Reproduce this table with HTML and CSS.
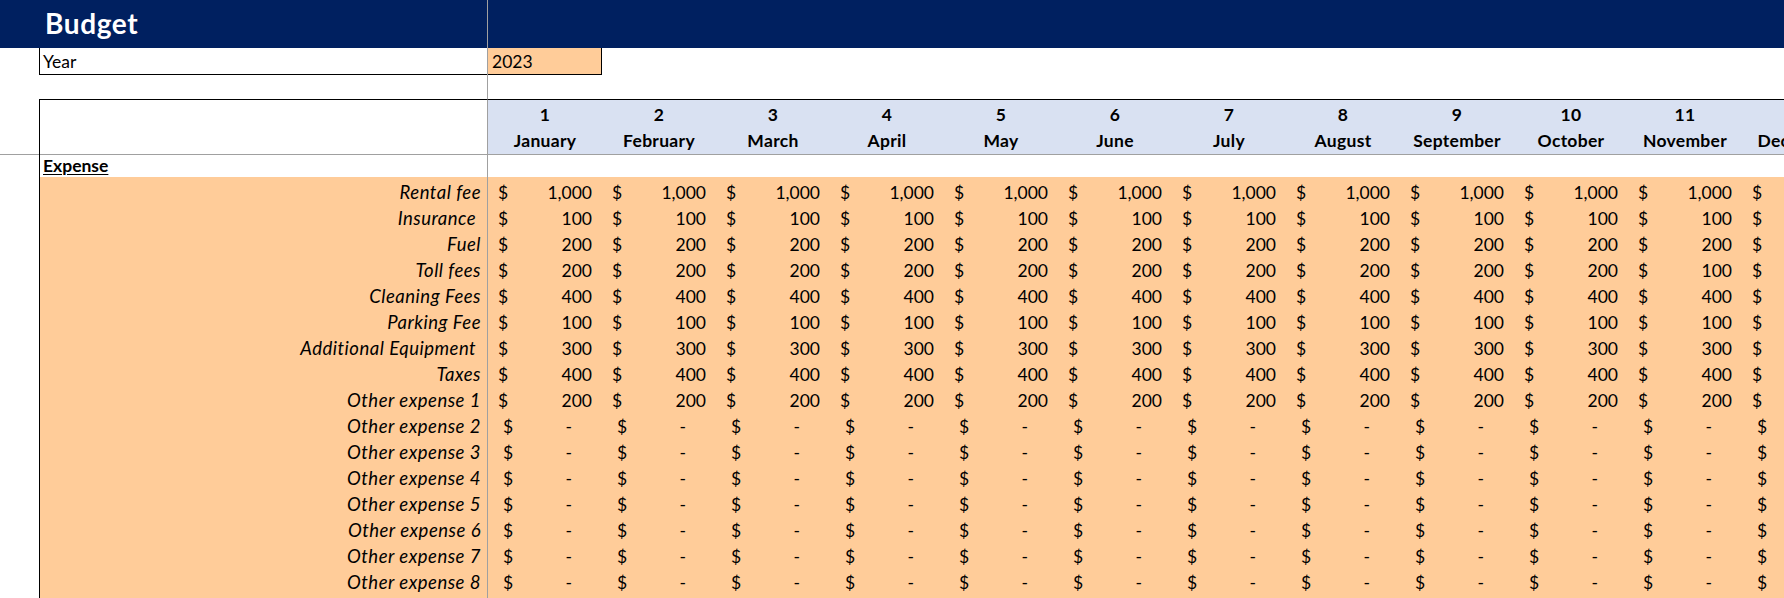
FILE: index.html
```html
<!DOCTYPE html>
<html lang="en">
<head>
<meta charset="utf-8">
<title>Budget</title>
<link rel="stylesheet" href="styles.css">
</head>
<body>
<div class="sheet">
  <div class="row band">
    <div class="a"></div>
    <div class="b title">Budget</div>
    <div class="fill"></div>
  </div>
  <div class="row year">
    <div class="a"></div>
    <div class="b boxed">Year</div>
    <div class="yv">2023</div>
  </div>
  <div class="row blank">
    <div class="a"></div>
    <div class="b"></div>
  </div>
  <div class="row head">
    <div class="a"></div>
    <div class="b boxed"></div>
    <div class="m"><span>1</span><span>January</span></div>
    <div class="m"><span>2</span><span>February</span></div>
    <div class="m"><span>3</span><span>March</span></div>
    <div class="m"><span>4</span><span>April</span></div>
    <div class="m"><span>5</span><span>May</span></div>
    <div class="m"><span>6</span><span>June</span></div>
    <div class="m"><span>7</span><span>July</span></div>
    <div class="m"><span>8</span><span>August</span></div>
    <div class="m"><span>9</span><span>September</span></div>
    <div class="m"><span>10</span><span>October</span></div>
    <div class="m"><span>11</span><span>November</span></div>
    <div class="m"><span>12</span><span>December</span></div>
  </div>
  <div class="row section">
    <div class="a"></div>
    <div class="b boxed"><span class="sec">Expense</span></div>
  </div>

  <div class="row data">
    <div class="a"></div><div class="b boxed lbl">Rental fee</div>
    <div class="v"><span>$</span><span>1,000</span></div><div class="v"><span>$</span><span>1,000</span></div><div class="v"><span>$</span><span>1,000</span></div><div class="v"><span>$</span><span>1,000</span></div><div class="v"><span>$</span><span>1,000</span></div><div class="v"><span>$</span><span>1,000</span></div><div class="v"><span>$</span><span>1,000</span></div><div class="v"><span>$</span><span>1,000</span></div><div class="v"><span>$</span><span>1,000</span></div><div class="v"><span>$</span><span>1,000</span></div><div class="v"><span>$</span><span>1,000</span></div><div class="v"><span>$</span><span>1,000</span></div>
  </div>
  <div class="row data">
    <div class="a"></div><div class="b boxed lbl">Insurance </div>
    <div class="v"><span>$</span><span>100</span></div><div class="v"><span>$</span><span>100</span></div><div class="v"><span>$</span><span>100</span></div><div class="v"><span>$</span><span>100</span></div><div class="v"><span>$</span><span>100</span></div><div class="v"><span>$</span><span>100</span></div><div class="v"><span>$</span><span>100</span></div><div class="v"><span>$</span><span>100</span></div><div class="v"><span>$</span><span>100</span></div><div class="v"><span>$</span><span>100</span></div><div class="v"><span>$</span><span>100</span></div><div class="v"><span>$</span><span>100</span></div>
  </div>
  <div class="row data">
    <div class="a"></div><div class="b boxed lbl">Fuel</div>
    <div class="v"><span>$</span><span>200</span></div><div class="v"><span>$</span><span>200</span></div><div class="v"><span>$</span><span>200</span></div><div class="v"><span>$</span><span>200</span></div><div class="v"><span>$</span><span>200</span></div><div class="v"><span>$</span><span>200</span></div><div class="v"><span>$</span><span>200</span></div><div class="v"><span>$</span><span>200</span></div><div class="v"><span>$</span><span>200</span></div><div class="v"><span>$</span><span>200</span></div><div class="v"><span>$</span><span>200</span></div><div class="v"><span>$</span><span>200</span></div>
  </div>
  <div class="row data">
    <div class="a"></div><div class="b boxed lbl">Toll fees</div>
    <div class="v"><span>$</span><span>200</span></div><div class="v"><span>$</span><span>200</span></div><div class="v"><span>$</span><span>200</span></div><div class="v"><span>$</span><span>200</span></div><div class="v"><span>$</span><span>200</span></div><div class="v"><span>$</span><span>200</span></div><div class="v"><span>$</span><span>200</span></div><div class="v"><span>$</span><span>200</span></div><div class="v"><span>$</span><span>200</span></div><div class="v"><span>$</span><span>200</span></div><div class="v"><span>$</span><span>100</span></div><div class="v"><span>$</span><span>100</span></div>
  </div>
  <div class="row data">
    <div class="a"></div><div class="b boxed lbl">Cleaning Fees</div>
    <div class="v"><span>$</span><span>400</span></div><div class="v"><span>$</span><span>400</span></div><div class="v"><span>$</span><span>400</span></div><div class="v"><span>$</span><span>400</span></div><div class="v"><span>$</span><span>400</span></div><div class="v"><span>$</span><span>400</span></div><div class="v"><span>$</span><span>400</span></div><div class="v"><span>$</span><span>400</span></div><div class="v"><span>$</span><span>400</span></div><div class="v"><span>$</span><span>400</span></div><div class="v"><span>$</span><span>400</span></div><div class="v"><span>$</span><span>400</span></div>
  </div>
  <div class="row data">
    <div class="a"></div><div class="b boxed lbl">Parking Fee</div>
    <div class="v"><span>$</span><span>100</span></div><div class="v"><span>$</span><span>100</span></div><div class="v"><span>$</span><span>100</span></div><div class="v"><span>$</span><span>100</span></div><div class="v"><span>$</span><span>100</span></div><div class="v"><span>$</span><span>100</span></div><div class="v"><span>$</span><span>100</span></div><div class="v"><span>$</span><span>100</span></div><div class="v"><span>$</span><span>100</span></div><div class="v"><span>$</span><span>100</span></div><div class="v"><span>$</span><span>100</span></div><div class="v"><span>$</span><span>100</span></div>
  </div>
  <div class="row data">
    <div class="a"></div><div class="b boxed lbl">Additional Equipment </div>
    <div class="v"><span>$</span><span>300</span></div><div class="v"><span>$</span><span>300</span></div><div class="v"><span>$</span><span>300</span></div><div class="v"><span>$</span><span>300</span></div><div class="v"><span>$</span><span>300</span></div><div class="v"><span>$</span><span>300</span></div><div class="v"><span>$</span><span>300</span></div><div class="v"><span>$</span><span>300</span></div><div class="v"><span>$</span><span>300</span></div><div class="v"><span>$</span><span>300</span></div><div class="v"><span>$</span><span>300</span></div><div class="v"><span>$</span><span>300</span></div>
  </div>
  <div class="row data">
    <div class="a"></div><div class="b boxed lbl">Taxes</div>
    <div class="v"><span>$</span><span>400</span></div><div class="v"><span>$</span><span>400</span></div><div class="v"><span>$</span><span>400</span></div><div class="v"><span>$</span><span>400</span></div><div class="v"><span>$</span><span>400</span></div><div class="v"><span>$</span><span>400</span></div><div class="v"><span>$</span><span>400</span></div><div class="v"><span>$</span><span>400</span></div><div class="v"><span>$</span><span>400</span></div><div class="v"><span>$</span><span>400</span></div><div class="v"><span>$</span><span>400</span></div><div class="v"><span>$</span><span>400</span></div>
  </div>
  <div class="row data">
    <div class="a"></div><div class="b boxed lbl">Other expense 1</div>
    <div class="v"><span>$</span><span>200</span></div><div class="v"><span>$</span><span>200</span></div><div class="v"><span>$</span><span>200</span></div><div class="v"><span>$</span><span>200</span></div><div class="v"><span>$</span><span>200</span></div><div class="v"><span>$</span><span>200</span></div><div class="v"><span>$</span><span>200</span></div><div class="v"><span>$</span><span>200</span></div><div class="v"><span>$</span><span>200</span></div><div class="v"><span>$</span><span>200</span></div><div class="v"><span>$</span><span>200</span></div><div class="v"><span>$</span><span>200</span></div>
  </div>
  <div class="row data">
    <div class="a"></div><div class="b boxed lbl">Other expense 2</div>
    <div class="v z"><span>$</span><span>-</span></div><div class="v z"><span>$</span><span>-</span></div><div class="v z"><span>$</span><span>-</span></div><div class="v z"><span>$</span><span>-</span></div><div class="v z"><span>$</span><span>-</span></div><div class="v z"><span>$</span><span>-</span></div><div class="v z"><span>$</span><span>-</span></div><div class="v z"><span>$</span><span>-</span></div><div class="v z"><span>$</span><span>-</span></div><div class="v z"><span>$</span><span>-</span></div><div class="v z"><span>$</span><span>-</span></div><div class="v z"><span>$</span><span>-</span></div>
  </div>
  <div class="row data">
    <div class="a"></div><div class="b boxed lbl">Other expense 3</div>
    <div class="v z"><span>$</span><span>-</span></div><div class="v z"><span>$</span><span>-</span></div><div class="v z"><span>$</span><span>-</span></div><div class="v z"><span>$</span><span>-</span></div><div class="v z"><span>$</span><span>-</span></div><div class="v z"><span>$</span><span>-</span></div><div class="v z"><span>$</span><span>-</span></div><div class="v z"><span>$</span><span>-</span></div><div class="v z"><span>$</span><span>-</span></div><div class="v z"><span>$</span><span>-</span></div><div class="v z"><span>$</span><span>-</span></div><div class="v z"><span>$</span><span>-</span></div>
  </div>
  <div class="row data">
    <div class="a"></div><div class="b boxed lbl">Other expense 4</div>
    <div class="v z"><span>$</span><span>-</span></div><div class="v z"><span>$</span><span>-</span></div><div class="v z"><span>$</span><span>-</span></div><div class="v z"><span>$</span><span>-</span></div><div class="v z"><span>$</span><span>-</span></div><div class="v z"><span>$</span><span>-</span></div><div class="v z"><span>$</span><span>-</span></div><div class="v z"><span>$</span><span>-</span></div><div class="v z"><span>$</span><span>-</span></div><div class="v z"><span>$</span><span>-</span></div><div class="v z"><span>$</span><span>-</span></div><div class="v z"><span>$</span><span>-</span></div>
  </div>
  <div class="row data">
    <div class="a"></div><div class="b boxed lbl">Other expense 5</div>
    <div class="v z"><span>$</span><span>-</span></div><div class="v z"><span>$</span><span>-</span></div><div class="v z"><span>$</span><span>-</span></div><div class="v z"><span>$</span><span>-</span></div><div class="v z"><span>$</span><span>-</span></div><div class="v z"><span>$</span><span>-</span></div><div class="v z"><span>$</span><span>-</span></div><div class="v z"><span>$</span><span>-</span></div><div class="v z"><span>$</span><span>-</span></div><div class="v z"><span>$</span><span>-</span></div><div class="v z"><span>$</span><span>-</span></div><div class="v z"><span>$</span><span>-</span></div>
  </div>
  <div class="row data">
    <div class="a"></div><div class="b boxed lbl">Other expense 6</div>
    <div class="v z"><span>$</span><span>-</span></div><div class="v z"><span>$</span><span>-</span></div><div class="v z"><span>$</span><span>-</span></div><div class="v z"><span>$</span><span>-</span></div><div class="v z"><span>$</span><span>-</span></div><div class="v z"><span>$</span><span>-</span></div><div class="v z"><span>$</span><span>-</span></div><div class="v z"><span>$</span><span>-</span></div><div class="v z"><span>$</span><span>-</span></div><div class="v z"><span>$</span><span>-</span></div><div class="v z"><span>$</span><span>-</span></div><div class="v z"><span>$</span><span>-</span></div>
  </div>
  <div class="row data">
    <div class="a"></div><div class="b boxed lbl">Other expense 7</div>
    <div class="v z"><span>$</span><span>-</span></div><div class="v z"><span>$</span><span>-</span></div><div class="v z"><span>$</span><span>-</span></div><div class="v z"><span>$</span><span>-</span></div><div class="v z"><span>$</span><span>-</span></div><div class="v z"><span>$</span><span>-</span></div><div class="v z"><span>$</span><span>-</span></div><div class="v z"><span>$</span><span>-</span></div><div class="v z"><span>$</span><span>-</span></div><div class="v z"><span>$</span><span>-</span></div><div class="v z"><span>$</span><span>-</span></div><div class="v z"><span>$</span><span>-</span></div>
  </div>
  <div class="row data">
    <div class="a"></div><div class="b boxed lbl">Other expense 8</div>
    <div class="v z"><span>$</span><span>-</span></div><div class="v z"><span>$</span><span>-</span></div><div class="v z"><span>$</span><span>-</span></div><div class="v z"><span>$</span><span>-</span></div><div class="v z"><span>$</span><span>-</span></div><div class="v z"><span>$</span><span>-</span></div><div class="v z"><span>$</span><span>-</span></div><div class="v z"><span>$</span><span>-</span></div><div class="v z"><span>$</span><span>-</span></div><div class="v z"><span>$</span><span>-</span></div><div class="v z"><span>$</span><span>-</span></div><div class="v z"><span>$</span><span>-</span></div>
  </div>
  <div class="row data">
    <div class="a"></div><div class="b boxed lbl">Other expense 9</div>
    <div class="v z"><span>$</span><span>-</span></div><div class="v z"><span>$</span><span>-</span></div><div class="v z"><span>$</span><span>-</span></div><div class="v z"><span>$</span><span>-</span></div><div class="v z"><span>$</span><span>-</span></div><div class="v z"><span>$</span><span>-</span></div><div class="v z"><span>$</span><span>-</span></div><div class="v z"><span>$</span><span>-</span></div><div class="v z"><span>$</span><span>-</span></div><div class="v z"><span>$</span><span>-</span></div><div class="v z"><span>$</span><span>-</span></div><div class="v z"><span>$</span><span>-</span></div>
  </div>
</div>
</body>
</html>
```

FILE: styles.css
```css
html, body {
  margin: 0;
  padding: 0;
  overflow: hidden;
  background: #ffffff;
}

body {
  width: 1784px;
  height: 598px;
  font-family: Lato, "Liberation Sans", sans-serif;
  font-size: 17.5px;
  color: #000000;
}

.sheet {
  width: 1856px;
}

.row {
  display: grid;
  grid-template-columns: 39px 449px repeat(12, 114px);
  box-sizing: border-box;
}

.row > div {
  box-sizing: border-box;
  min-width: 0;
  white-space: pre;
}

.b {
  border-left: 1px solid transparent;
  border-right: 1px solid #a0a0a0;
}

.b.boxed {
  border-left-color: #000000;
}

/* title band */
.band {
  height: 48px;
  background: #002060;
}

.band .fill {
  grid-column: 3 / -1;
}

.title {
  color: #ffffff;
  font-weight: 700;
  font-size: 28px;
  letter-spacing: 0.6px;
  line-height: 46px;
  padding-left: 5px;
}

/* year row */
.year {
  height: 26px;
  line-height: 25px;
}

.year > div {
  padding-top: 1px;
}

.year .b {
  border-bottom: 1px solid #000000;
  padding-left: 3px;
}

.yv {
  background: #ffcc99;
  border-right: 1px solid #000000;
  border-bottom: 1px solid #000000;
  padding-left: 4px;
}

.blank {
  height: 25px;
}

/* month header */
.head {
  height: 53px;
}

.head > div {
  border-bottom: 1px solid #a0a0a0;
}

.head .b,
.head .m {
  border-top: 1px solid #000000;
}

.m {
  background: #d9e1f2;
  display: flex;
  flex-direction: column;
  align-items: center;
  font-weight: 700;
  line-height: 26px;
  letter-spacing: 0.3px;
  padding-top: 2px;
}

/* section label */
.section {
  height: 25px;
  line-height: 25px;
}

.section .b {
  padding-left: 3px;
  padding-top: 1px;
}

.sec {
  font-weight: 700;
  text-decoration: underline;
  text-underline-offset: 2px;
}

/* data rows */
.data {
  height: 26px;
  line-height: 25px;
}

.data > div {
  padding-top: 3px;
}

.data .b,
.data .v {
  background: #ffcc99;
}

.lbl {
  font-style: italic;
  font-size: 18.5px;
  letter-spacing: 0.5px;
  text-align: right;
  padding-right: 6px;
}

.v {
  display: flex;
  justify-content: space-between;
  padding-left: 10px;
  padding-right: 10px;
}

.v.z {
  padding-left: 15px;
  padding-right: 30px;
}
```
